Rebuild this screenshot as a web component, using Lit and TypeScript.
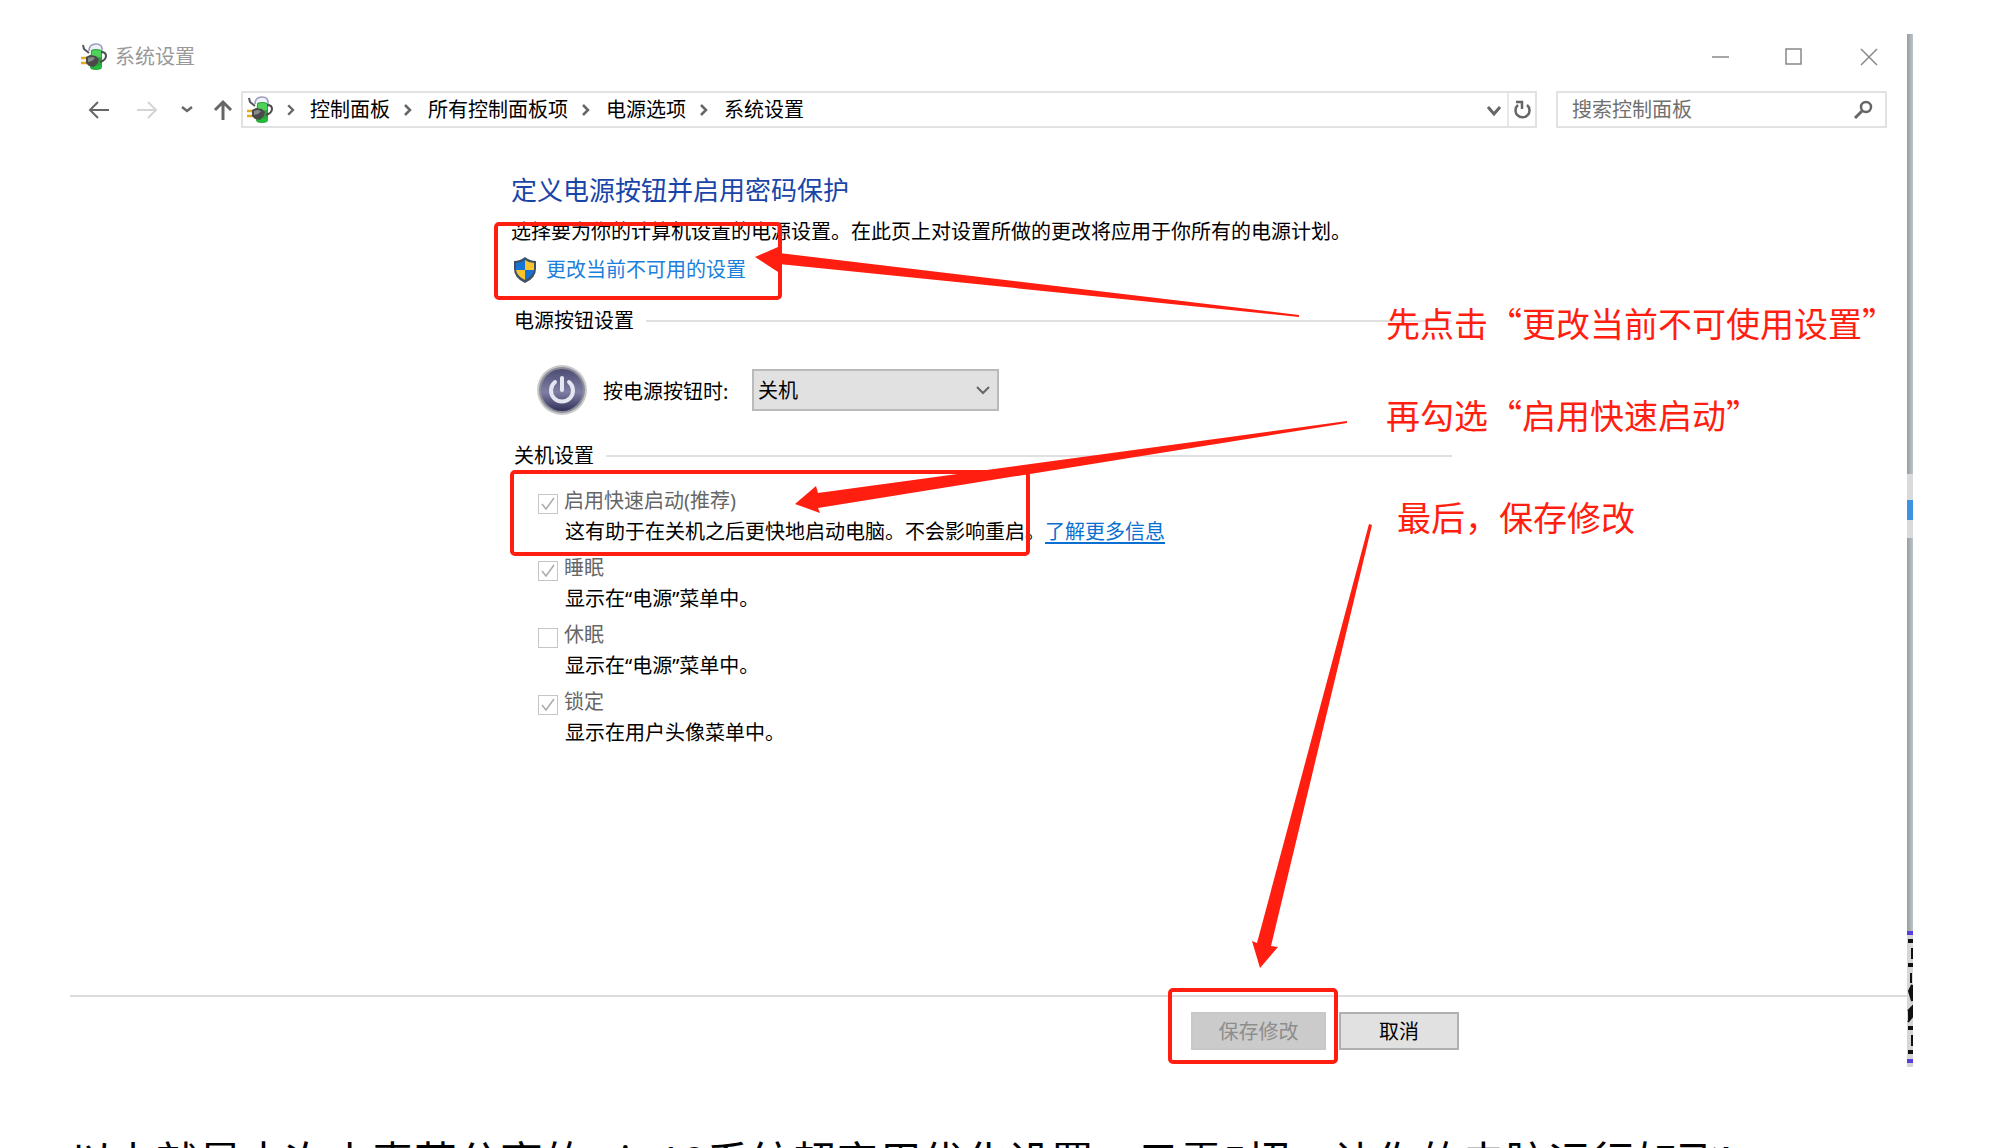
import { LitElement, html, svg, css } from "lit";
import { customElement, property } from "lit/decorators.js";

interface Option {
  id: string;
  label: string;
  note: string;
  checked: boolean;
  link?: string;
}

const OPTIONS: Option[] = [
  { id: "fast", label: "启用快速启动(推荐)", note: "这有助于在关机之后更快地启动电脑。不会影响重启。", checked: true, link: "了解更多信息" },
  { id: "sleep", label: "睡眠", note: "显示在“电源”菜单中。", checked: true },
  { id: "hibernate", label: "休眠", note: "显示在“电源”菜单中。", checked: false },
  { id: "lock", label: "锁定", note: "显示在用户头像菜单中。", checked: true },
];

const CRUMBS = ["控制面板", "所有控制面板项", "电源选项", "系统设置"];

@customElement("power-plan-icon")
class PowerPlanIcon extends LitElement {
  static styles = css`
    :host { display: block; flex: none; }
    .icon { display: block; width: 28px; height: 28px; }
  `;
  render() {
    return html`<svg class="icon" viewBox="0 0 28 28" aria-hidden="true">
      <path d="M9 8q0-7 7-7t6 7" fill="#eef0fa" stroke="#9a9cc0" stroke-width="1.5" />
      <path d="M11 8q0-2 5-2t6 2v16q0 3-6 3t-6-3z" fill="#2aa338" />
      <path d="M12 8q4-2 9 0v6l-9 1z" fill="#4ed25a" />
      <path d="M12 22q5 2 9 0v3q-4 2-9 0z" fill="#1fc03a" />
      <path d="M21 9q5 0 5 4t-6 6" fill="none" stroke="#4c4c4c" stroke-width="2" />
      <path d="M3 2l1 4 5 4" fill="none" stroke="#555" stroke-width="2" />
      <path d="M1 15h7M1 20h7" stroke="#e0ad22" stroke-width="2.5" />
      <path d="M6 14l4-2 6 1 3 3-1 4-4 4-5-1-3-3z" fill="#4a4a4a" />
      <path d="M8 15l4-1 3 1-3 3-4 1z" fill="#8b8b8b" />
    </svg>`;
  }
}

@customElement("setting-option")
class SettingOption extends LitElement {
  @property({ attribute: false }) option!: Option;

  static styles = css`
    :host { display: block; }
    .line { display: flex; align-items: flex-end; gap: 6px; height: 30px; }
    .box { display: grid; width: 20px; height: 22px; flex: none; }
    .box > * { grid-area: 1 / 1; }
    .check { appearance: none; margin: 0; width: 20px; height: 20px; border: 1px solid #c6c6c6; background: #fff; }
    .mark { width: 20px; height: 20px; pointer-events: none; }
    .label { color: #666; line-height: 30px; }
    .note { margin: 0; padding-left: 27px; line-height: 32px; color: #000; white-space: nowrap; }
    .more { color: #0a6fd0; text-underline-offset: 3px; }
  `;
  render() {
    const o = this.option;
    return html`
      <div class="line">
        <span class="box">
          <input class="check" type="checkbox" id=${o.id} ?checked=${o.checked} disabled />
          ${o.checked
            ? html`<svg class="mark" viewBox="0 0 20 20" aria-hidden="true"><path d="M4 10l4 5 8-11" fill="none" stroke="#aaa" stroke-width="1.5" /></svg>`
            : null}
        </span>
        <label class="label" for=${o.id}>${o.label}</label>
      </div>
      <p class="note">${o.note}${o.link ? html`<a class="more" href="#more">${o.link}</a>` : null}</p>
    `;
  }
}

@customElement("guide-marks")
class GuideMarks extends LitElement {
  static styles = css`
    :host { position: absolute; inset: 0; pointer-events: none; }
    .layer { display: block; width: 100%; height: 100%; overflow: visible; }
    .frame { fill: none; stroke: #ff1e10; stroke-width: 4; }
    .arrow { fill: #ff1e10; }
    .tip { fill: #ff1e10; font: 34px "Noto Sans CJK SC", sans-serif; }
  `;
  render() {
    const frames = [
      [426, 190, 284, 74],
      [442, 438, 516, 82],
      [1100, 956, 166, 72],
    ];
    const arrows = [
      "685,223 708,213 709,219 1229,281 1229,283 709,230 708,238",
      "725,470 746,452 748,459 1277,387 1277,389 748,474 750,479",
      "1190,934 1182,907 1187,909 1299,490 1302,491 1201,912 1208,913",
    ];
    const tips: [number, number, string][] = [
      [1316, 303, "先点击“更改当前不可使用设置”"],
      [1316, 395, "再勾选“启用快速启动”"],
      [1327, 497, "最后，保存修改"],
    ];
    return html`<svg class="layer">
      ${frames.map(([x, y, w, h]) => svg`<rect class="frame" x=${x} y=${y} width=${w} height=${h} rx="3" />`)}
      ${arrows.map((p) => svg`<polygon class="arrow" points=${p} />`)}
      ${tips.map(([x, y, t]) => svg`<text class="tip" x=${x} y=${y}>${t}</text>`)}
    </svg>`;
  }
}

@customElement("app-root")
class AppRoot extends LitElement {
  static styles = css`
    :host {
      display: block;
      box-sizing: border-box;
      height: 100vh;
      overflow: hidden;
      padding: 34px 87px 0 70px;
      background: #fff;
      color: #000;
      font: 20px "Noto Sans", "Noto Sans CJK SC", sans-serif;
    }
    * { box-sizing: border-box; }
    button, input, select { font: inherit; color: inherit; border-radius: 0; }
    .window { position: relative; display: flex; min-height: calc(100vh - 115px); }
    .body { flex: 1; min-width: 0; display: flex; flex-direction: column; }
    .edge { width: 6px; flex: none; display: flex; flex-direction: column; background: linear-gradient(90deg, #979ea1, #bcc4c7); }
    .edge-top { height: 440px; }
    .edge-pale { height: 64px; padding-top: 26px; background: #d9dadb; }
    .edge-blue { height: 20px; background: #3d92e2; }
    .edge-rest { flex: 1; }
    .edge-text { display: block; width: 6px; height: 136px; background: #d6d6d6; }

    .titlebar { display: flex; align-items: center; height: 46px; padding: 0 27px 0 10px; }
    .title { flex: 1; margin: 0 0 0 7px; font-size: 20px; font-weight: 400; line-height: 30px; color: #999; }
    .controls { display: flex; gap: 52px; }
    .plain { display: grid; place-items: center; padding: 0; border: 0; background: none; }
    .controls .plain { width: 22px; height: 22px; }
    .glyph { display: block; width: 22px; height: 22px; fill: none; stroke: #666; stroke-width: 2; }
    .thin { stroke: #888; stroke-width: 1.5; }
    .faint { stroke: #d4d4d4; }

    .nav { display: flex; align-items: center; padding: 11px 20px 0 18px; }
    .moves { display: flex; align-items: center; gap: 16px; width: 153px; }
    .moves .plain:nth-child(2) { margin-left: 10px; }
    .address { flex: 1; display: flex; align-items: center; height: 37px; border: 2px solid #e2e2e2; padding-left: 3px; }
    .crumbs { flex: 1; display: flex; align-items: center; margin: 0; padding: 0; list-style: none; }
    .crumb { display: flex; align-items: center; white-space: nowrap; line-height: 30px; }
    .sep { display: block; width: 38px; height: 22px; fill: none; stroke: #666; stroke-width: 2; }
    .crumb:first-child .sep { width: 36px; }
    .refresh { height: 33px; width: 28px; border-left: 2px solid #e8e8e8; }
    .drop { width: 26px; }
    .search { display: flex; align-items: center; width: 331px; height: 37px; margin-left: 19px; padding: 0 11px 0 14px; border: 2px solid #e2e2e2; }
    .search-input { flex: 1; min-width: 0; padding: 0; border: 0; outline: 0; background: none; line-height: 30px; }
    .search-input::placeholder { color: #707070; opacity: 1; }

    .main { flex: 1; padding: 44px 0 0 441px; }
    .heading { margin: 0 0 9px; font-size: 26px; font-weight: 400; line-height: 36px; color: #1a45a8; }
    .lead { margin: 0 0 8px; line-height: 30px; white-space: nowrap; }
    .admin { display: flex; align-items: center; gap: 9px; height: 30px; padding-left: 2px; }
    .admin-link { color: #1a80dc; text-decoration: none; line-height: 30px; }
    .shield { display: block; width: 24px; height: 28px; }
    .group { display: flex; align-items: center; gap: 12px; width: 941px; margin: 21px 0 0; padding-left: 3px; }
    .group-title { margin: 0; font-size: 20px; font-weight: 400; line-height: 30px; }
    .rule { flex: 1; height: 2px; background: #e0e0e0; }
    .power { display: flex; align-items: center; margin-top: 28px; padding-left: 26px; height: 52px; }
    .power-icon { display: block; width: 52px; height: 52px; }
    .power-label { width: 149px; margin-left: 14px; white-space: nowrap; }
    .picker { display: grid; align-items: center; width: 247px; height: 42px; }
    .picker > * { grid-area: 1 / 1; }
    .select { appearance: none; width: 100%; height: 42px; padding: 0 4px; border: 2px solid #bababa; background: #e1e1e1; opacity: 1; color: #000; }
    .picker .glyph { justify-self: end; margin-right: 4px; pointer-events: none; }
    .shutdown { margin-top: 25px; }
    .options { display: flex; flex-direction: column; gap: 5px; padding: 15px 0 0 27px; }

    .footer { display: flex; gap: 13px; border-top: 2px solid #dcdcdc; padding: 15px 0 17px 1121px; }
    .btn { height: 38px; width: 120px; padding: 0 0 2px; border: 2px solid #b0b0b0; background: #e1e1e1; }
    .save { width: 135px; border-color: #c8c8c8; background: #cbcbcb; color: #8d8d8d; }
    .after { margin: 70px 0 0; font-size: 43px; line-height: 50px; color: #000; white-space: nowrap; }
  `;

  render() {
    return html`
      <section class="window">
        <div class="body">
          <header class="titlebar">
            <power-plan-icon></power-plan-icon>
            <h1 class="title">系统设置</h1>
            <div class="controls">
              <button class="plain" aria-label="最小化"><svg class="glyph thin" viewBox="0 0 22 22"><path d="M2 11h17" /></svg></button>
              <button class="plain" aria-label="最大化"><svg class="glyph thin" viewBox="0 0 22 22"><rect x="2" y="3" width="15" height="15" /></svg></button>
              <button class="plain" aria-label="关闭"><svg class="glyph thin" viewBox="0 0 22 22"><path d="M3 3l16 16M19 3L3 19" /></svg></button>
            </div>
          </header>
          <nav class="nav">
            <div class="moves">
              <button class="plain" aria-label="后退"><svg class="glyph" viewBox="0 0 22 22"><path d="M21 11H2M10 3l-8 8 8 8" /></svg></button>
              <button class="plain" aria-label="前进"><svg class="glyph faint" viewBox="0 0 22 22"><path d="M1 11h19M12 3l8 8-8 8" /></svg></button>
              <button class="plain" aria-label="最近位置"><svg class="glyph" viewBox="0 0 22 22"><path d="M8 8l5 4 5-4" stroke-width="2.5" /></svg></button>
              <button class="plain" aria-label="上移"><svg class="glyph" viewBox="0 0 22 22"><path d="M11 21V3M3 11l8-8 8 8" stroke-width="3" /></svg></button>
            </div>
            <div class="address">
              <power-plan-icon></power-plan-icon>
              <ol class="crumbs">
                ${CRUMBS.map(
                  (c) => html`<li class="crumb">
                    <svg class="sep" viewBox="0 0 38 22" aria-hidden="true"><path d="M15 6l5 5-5 5" stroke-width="2.5" /></svg>${c}
                  </li>`
                )}
              </ol>
              <button class="plain drop" aria-label="历史记录"><svg class="glyph" viewBox="0 0 22 22"><path d="M5 8l6 7 6-7" stroke-width="3" /></svg></button>
              <button class="plain refresh" aria-label="刷新"><svg class="glyph" viewBox="0 0 22 22"><path d="M7 6a7 7 0 1 0 9 0M5 3h6v7" stroke-width="2.5" /></svg></button>
            </div>
            <label class="search">
              <input class="search-input" type="text" placeholder="搜索控制面板" aria-label="搜索控制面板" />
              <svg class="glyph" viewBox="0 0 22 22" aria-hidden="true"><circle cx="14" cy="8" r="5" stroke-width="2.5" /><path d="M10 12l-7 7" stroke-width="3" /></svg>
            </label>
          </nav>
          <main class="main">
            <h2 class="heading">定义电源按钮并启用密码保护</h2>
            <p class="lead">选择要为你的计算机设置的电源设置。在此页上对设置所做的更改将应用于你所有的电源计划。</p>
            <div class="admin">
              <svg class="shield" viewBox="0 0 24 28" aria-hidden="true">
                <path d="M12 1q5 4 11 4v8q0 9-11 14Q1 22 1 13V5q6 0 11-4z" fill="#3c5166" />
                <path d="M12 4v10H3V7q5 0 9-3zM12 14h9q-1 6-9 10z" fill="#1672d4" />
                <path d="M12 4v10h9V7q-5 0-9-3zM12 14H3q1 6 9 10z" fill="#fbc42c" />
              </svg>
              <a class="admin-link" href="#admin">更改当前不可用的设置</a>
            </div>
            <div class="group">
              <h3 class="group-title">电源按钮设置</h3>
              <span class="rule"></span>
            </div>
            <div class="power">
              <svg class="power-icon" viewBox="0 0 52 52" aria-hidden="true">
                <defs>
                  <linearGradient id="orb" x1="0" y1="0" x2="0" y2="1">
                    <stop offset="0" stop-color="#4c4c74" />
                    <stop offset=".55" stop-color="#7f7fa4" />
                    <stop offset="1" stop-color="#30305a" />
                  </linearGradient>
                </defs>
                <circle cx="25" cy="26" r="25" fill="#c9c9cc" />
                <circle cx="25" cy="26" r="23" fill="#8d8d98" />
                <circle cx="25" cy="26" r="21" fill="url(#orb)" />
                <path d="M18 18a11 11 0 1 0 14 0" fill="none" stroke="#e6e6f2" stroke-width="4" stroke-linecap="round" />
                <path d="M25 14v12" stroke="#e6e6f2" stroke-width="4" stroke-linecap="round" />
              </svg>
              <label class="power-label" for="action">按电源按钮时:</label>
              <span class="picker">
                <select class="select" id="action" disabled><option>关机</option></select>
                <svg class="glyph" viewBox="0 0 22 22" aria-hidden="true"><path d="M4 8l6 6 6-6" /></svg>
              </span>
            </div>
            <div class="group shutdown">
              <h3 class="group-title">关机设置</h3>
              <span class="rule"></span>
            </div>
            <div class="options">
              ${OPTIONS.map((o) => html`<setting-option .option=${o}></setting-option>`)}
            </div>
          </main>
          <footer class="footer">
            <button class="btn save" disabled>保存修改</button>
            <button class="btn">取消</button>
          </footer>
        </div>
        <div class="edge">
          <div class="edge-top"></div>
          <div class="edge-pale"><div class="edge-blue"></div></div>
          <div class="edge-rest"></div>
          <svg class="edge-text" viewBox="0 0 6 136" aria-hidden="true">
            <path d="M0 2h6M0 130h6" stroke="#5a3fe0" stroke-width="4" />
            <path d="M1 10h5M1 34h5M1 97h5M1 121h5" stroke="#111" stroke-width="4" />
            <path d="M5 17v11M5 104v11M4 42v10M2 60l3-6v16zM1 80l4-4v10l-4 5" stroke="#111" stroke-width="2" fill="#111" />
          </svg>
        </div>
        <guide-marks></guide-marks>
      </section>
      <p class="after">以上就是本次小麦芽分享的win10系统超实用优化设置，只需5招，让你的电脑运行如飞!</p>
    `;
  }
}
